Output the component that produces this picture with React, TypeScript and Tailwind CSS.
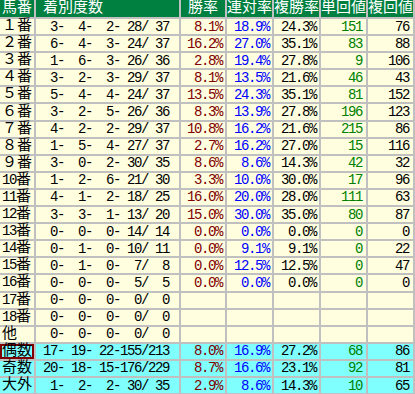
import React from "react";

type Row = {
  label: string;
  counts: string;
  win?: string;
  ren?: string;
  fuku?: string;
  tan?: string;
  fukuKai?: string;
  cyan?: boolean;
  marked?: boolean;
};

const rows: Row[] = [
  { label: "１番", counts: "  3-  4-  2- 28/ 37", win: "8.1%", ren: "18.9%", fuku: "24.3%", tan: "151", fukuKai: "76" },
  { label: "２番", counts: "  6-  4-  3- 24/ 37", win: "16.2%", ren: "27.0%", fuku: "35.1%", tan: "83", fukuKai: "88" },
  { label: "３番", counts: "  1-  6-  3- 26/ 36", win: "2.8%", ren: "19.4%", fuku: "27.8%", tan: "9", fukuKai: "106" },
  { label: "４番", counts: "  3-  2-  3- 29/ 37", win: "8.1%", ren: "13.5%", fuku: "21.6%", tan: "46", fukuKai: "43" },
  { label: "５番", counts: "  5-  4-  4- 24/ 37", win: "13.5%", ren: "24.3%", fuku: "35.1%", tan: "81", fukuKai: "152" },
  { label: "６番", counts: "  3-  2-  5- 26/ 36", win: "8.3%", ren: "13.9%", fuku: "27.8%", tan: "196", fukuKai: "123" },
  { label: "７番", counts: "  4-  2-  2- 29/ 37", win: "10.8%", ren: "16.2%", fuku: "21.6%", tan: "215", fukuKai: "86" },
  { label: "８番", counts: "  1-  5-  4- 27/ 37", win: "2.7%", ren: "16.2%", fuku: "27.0%", tan: "15", fukuKai: "116" },
  { label: "９番", counts: "  3-  0-  2- 30/ 35", win: "8.6%", ren: "8.6%", fuku: "14.3%", tan: "42", fukuKai: "32" },
  { label: "10番", counts: "  1-  2-  6- 21/ 30", win: "3.3%", ren: "10.0%", fuku: "30.0%", tan: "17", fukuKai: "96" },
  { label: "11番", counts: "  4-  1-  2- 18/ 25", win: "16.0%", ren: "20.0%", fuku: "28.0%", tan: "111", fukuKai: "63" },
  { label: "12番", counts: "  3-  3-  1- 13/ 20", win: "15.0%", ren: "30.0%", fuku: "35.0%", tan: "80", fukuKai: "87" },
  { label: "13番", counts: "  0-  0-  0- 14/ 14", win: "0.0%", ren: "0.0%", fuku: "0.0%", tan: "0", fukuKai: "0" },
  { label: "14番", counts: "  0-  1-  0- 10/ 11", win: "0.0%", ren: "9.1%", fuku: "9.1%", tan: "0", fukuKai: "22" },
  { label: "15番", counts: "  0-  1-  0-  7/  8", win: "0.0%", ren: "12.5%", fuku: "12.5%", tan: "0", fukuKai: "47" },
  { label: "16番", counts: "  0-  0-  0-  5/  5", win: "0.0%", ren: "0.0%", fuku: "0.0%", tan: "0", fukuKai: "0" },
  { label: "17番", counts: "  0-  0-  0-  0/  0" },
  { label: "18番", counts: "  0-  0-  0-  0/  0" },
  { label: "他", counts: "  0-  0-  0-  0/  0" },
  { label: "偶数", counts: " 17- 19- 22-155/213", win: "8.0%", ren: "16.9%", fuku: "27.2%", tan: "68", fukuKai: "86", cyan: true, marked: true },
  { label: "奇数", counts: " 20- 18- 15-176/229", win: "8.7%", ren: "16.6%", fuku: "23.1%", tan: "92", fukuKai: "81", cyan: true },
  { label: "大外", counts: "  1-  2-  2- 30/ 35", win: "2.9%", ren: "8.6%", fuku: "14.3%", tan: "10", fukuKai: "65", cyan: true },
];

const headers = ["勝率", "連対率", "複勝率", "単回値", "複回値"];

function Num({ value, color, bg, pad }: { value?: string; color: string; bg: string; pad: string }) {
  return (
    <div className={`flex items-center justify-end ${bg} ${pad}`}>
      <span className={`whitespace-pre text-[14px] leading-none tracking-[-1.4px] ${color}`}>{value}</span>
    </div>
  );
}

// split label so half-width digits get the narrow mono pitch
function Label({ text }: { text: string }) {
  const m = text.match(/^(\d+)(.*)$/);
  if (!m) return <span className="whitespace-nowrap text-[15px] leading-none">{text}</span>;
  return (
    <span className="whitespace-nowrap text-[15px] leading-none">
      <span className="text-[14px] tracking-[-1.4px]">{m[1]}</span>
      {m[2]}
    </span>
  );
}

export default function App() {
  return (
    <div className="h-[394px] w-[415px] overflow-hidden bg-[#c0c0c0] font-['Liberation_Mono','Noto_Sans_CJK_JP',monospace] text-black">
      <div className="grid grid-cols-[34px_143px_44px_45px_45px_45px_45px] grid-rows-[17px_repeat(22,15.1px)] gap-[2px]">
        <div className="flex items-center justify-center bg-[#008040] text-[15px] leading-none text-white">
          馬番
        </div>
        <div className="flex items-center bg-[#008040] pl-[7px] text-[15px] leading-none text-white">
          着別度数
        </div>
        {headers.map((h) => (
          <div key={h} className="flex items-center justify-center bg-[#008040] text-[15px] leading-none text-white">
            {h}
          </div>
        ))}

        {rows.map((r) => {
          const bg = r.cyan ? "bg-[#80ffff]" : "bg-[#ffffe0]";
          return (
            <React.Fragment key={r.label}>
              <div
                className={`flex items-center pl-[2px] ${bg} ${
                  r.marked ? "shadow-[inset_0_0_0_2px_#800000]" : ""
                }`}
              >
                <Label text={r.label} />
              </div>
              <div className={`flex items-center ${bg}`}>
                <span className="whitespace-pre text-[14px] leading-none tracking-[-1.4px]">{r.counts}</span>
              </div>
              <Num value={r.win} color="text-[#800000]" bg={bg} pad="pr-[3px]" />
              <Num value={r.ren} color="text-[#0000ff]" bg={bg} pad="pr-[3px]" />
              <Num value={r.fuku} color="text-black" bg={bg} pad="pr-[3px]" />
              <Num value={r.tan} color="text-[#008000]" bg={bg} pad="pr-[4px]" />
              <Num value={r.fukuKai} color="text-black" bg={bg} pad="pr-[4px]" />
            </React.Fragment>
          );
        })}
      </div>
    </div>
  );
}
